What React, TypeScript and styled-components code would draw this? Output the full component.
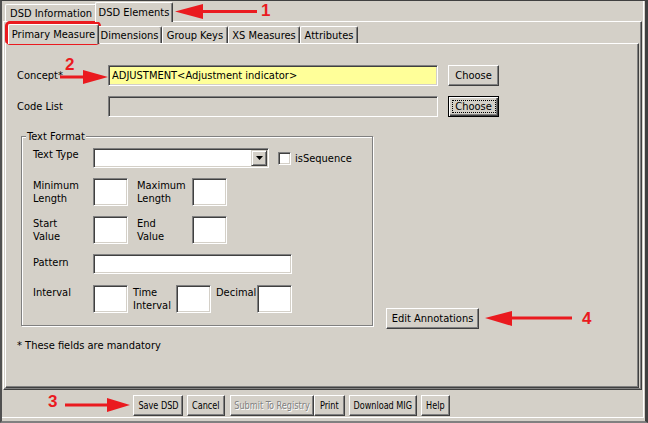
import React from "react";
import styled, { createGlobalStyle, css } from "styled-components";

const FACE = "#d4d0c8";
const RED = "#ea1a1f";

const Global = createGlobalStyle`
  html, body { margin: 0; padding: 0; background: ${FACE}; }
  body {
    font-family: "DejaVu Sans Condensed", "DejaVu Sans", sans-serif;
    font-size: 11px;
    line-height: 13px;
    color: #000;
  }
  * { box-sizing: border-box; }
`;

const Screen = styled.div`
  position: relative;
  width: 648px;
  height: 423px;
  overflow: hidden;
  background: ${FACE};
`;

const Window = styled.div`
  display: flex;
  flex-direction: column;
  width: 648px;
  height: 423px;
  border-top: 1px solid #404040;
  border-left: 2px solid #505050;
  border-right: 3px solid #404040;
  border-bottom: 2px solid #808080;
  padding: 0 1px 3px 0;
`;

const Body = styled.div`
  flex: 1;
  display: flex;
  flex-direction: column;
  min-height: 0;
  border-right: 1px solid #fff;
  border-bottom: 1px solid #fff;
`;

const TabStrip = styled.div<{ $pad: number; $h: number }>`
  display: flex;
  align-items: flex-end;
  flex: none;
  height: ${(p) => p.$h}px;
  padding-left: ${(p) => p.$pad}px;
  position: relative;
  z-index: 1;
`;

const Tab = styled.div<{ $w: number; $active?: boolean }>`
  flex: none;
  display: flex;
  align-items: center;
  justify-content: center;
  width: ${(p) => (p.$active ? p.$w + 4 : p.$w)}px;
  height: ${(p) => (p.$active ? 20 : 17)}px;
  margin: ${(p) => (p.$active ? "0 -2px -1px -2px" : "0")};
  background: ${FACE};
  border-top: 1px solid #fff;
  border-left: 1px solid #fff;
  border-right: 1px solid #404040;
  box-shadow: inset -1px 0 #808080;
  border-radius: 2px 2px 0 0;
  white-space: nowrap;
  position: relative;
  z-index: ${(p) => (p.$active ? 2 : 1)};
`;

const Panel = styled.div<{ $ml: number; $mr: number; $mb: number }>`
  flex: 1;
  display: flex;
  flex-direction: column;
  min-height: 0;
  margin: 0 ${(p) => p.$mr}px ${(p) => p.$mb}px ${(p) => p.$ml}px;
  border-top: 1px solid #fff;
  border-left: 1px solid #fff;
  border-right: 1px solid #404040;
  border-bottom: 1px solid #404040;
  box-shadow: inset -1px -1px #808080;
`;

const PageContent = styled.div`
  display: flex;
  flex-direction: column;
  padding: 21px 0 0 0;
`;

const FieldRow = styled.div<{ $mt?: number }>`
  display: flex;
  align-items: center;
  padding-left: 11px;
  margin-top: ${(p) => p.$mt ?? 0}px;
`;

const RowLabel = styled.div`
  width: 91px;
  flex: none;
  white-space: nowrap;
`;

const TextBox = styled.input<{ $w: number; $h?: number; $bg?: string }>`
  flex: none;
  width: ${(p) => p.$w}px;
  height: ${(p) => p.$h ?? 21}px;
  margin: 0;
  padding: 0 0 0 3px;
  font: inherit;
  color: #000;
  background: ${(p) => p.$bg ?? "#fff"};
  border: 1px solid;
  border-color: #808080 #fff #fff #808080;
  box-shadow: inset 1px 1px #404040, inset -1px -1px ${FACE};
  outline: none;
`;

const PushButton = styled.button<{ $w: number; $ml?: number; $focused?: boolean }>`
  position: relative;
  flex: none;
  display: flex;
  align-items: center;
  justify-content: center;
  width: ${(p) => p.$w}px;
  height: 21px;
  margin: 0 0 0 ${(p) => p.$ml ?? 0}px;
  padding: 0;
  font: inherit;
  color: #000;
  background: ${FACE};
  border: 1px solid;
  border-color: #fff #404040 #404040 #fff;
  box-shadow: inset -1px -1px #808080;
  white-space: nowrap;
  &:disabled {
    color: #808080;
    text-shadow: 1px 1px #fff;
  }
  ${(p) =>
    p.$focused &&
    css`
      border-color: #000;
      box-shadow: inset 1px 1px #fff, inset -1px -1px #404040, inset -2px -2px #808080;
      &::after {
        content: "";
        position: absolute;
        inset: 3px 2px 3px 3px;
        border: 1px dotted #000;
      }
    `}
`;

/* the footer buttons use a visibly narrower face than the form */
const NarrowText = styled.span`
  display: inline-block;
  flex: none;
  transform: scaleX(0.82);
  transform-origin: center;
`;

const MainRow = styled.div`
  display: flex;
  align-items: flex-end;
  padding-left: 15px;
  margin-top: 13px;
`;

const Group = styled.fieldset`
  margin: 0;
  width: 352px;
  min-width: 0;
  padding: 0 0 0 4px;
  border: 1px solid #808080;
  box-shadow: inset 1px 1px #fff, 1px 1px #fff;
`;

const Legend = styled.legend`
  padding: 0 1px;
  line-height: 13px;
  background: ${FACE};
`;

const FieldGrid = styled.div`
  display: flex;
  flex-direction: column;
  padding: 5px 0 12px 7px;
`;

const GridRow = styled.div<{ $mt?: number; $align?: string }>`
  display: flex;
  align-items: ${(p) => p.$align ?? "flex-start"};
  margin-top: ${(p) => p.$mt ?? 0}px;
`;

const FieldLabel = styled.div<{ $w: number; $ml?: number; $pt?: number }>`
  flex: none;
  width: ${(p) => p.$w}px;
  margin-left: ${(p) => p.$ml ?? 0}px;
  padding-top: ${(p) => p.$pt ?? 1}px;
  white-space: nowrap;
  align-self: flex-start;
`;

const SelectBox = styled.div`
  flex: none;
  display: flex;
  justify-content: flex-end;
  align-items: center;
  width: 176px;
  height: 20px;
  padding-right: 1px;
  background: #fff;
  border: 1px solid;
  border-color: #808080 #fff #fff #808080;
  box-shadow: inset 1px 1px #404040, inset -1px -1px ${FACE};
`;

const DropButton = styled.div`
  width: 16px;
  height: 16px;
  display: flex;
  align-items: center;
  justify-content: center;
  background: ${FACE};
  border: 1px solid;
  border-color: ${FACE} #404040 #404040 ${FACE};
  box-shadow: inset 1px 1px #fff, inset -1px -1px #808080;
`;

const CheckBox = styled.div`
  flex: none;
  width: 13px;
  height: 13px;
  margin-left: 9px;
  background: #fff;
  border: 1px solid;
  border-color: #808080 #fff #fff #808080;
  box-shadow: inset 1px 1px #404040, inset -1px -1px ${FACE};
`;

const CheckText = styled.span`
  margin-left: 4px;
  white-space: nowrap;
`;

const Note = styled.div`
  margin-top: 13px;
  padding-left: 11px;
`;

const ButtonBar = styled.div`
  flex: none;
  display: flex;
  align-items: flex-start;
  height: 27px;
  padding: 5px 0 0 131px;
`;

const Overlay = styled.svg`
  position: absolute;
  left: 0;
  top: 0;
  width: 648px;
  height: 423px;
  pointer-events: none;
`;

const Callout = styled.span<{ $x: number; $y: number }>`
  position: absolute;
  left: ${(p) => p.$x}px;
  top: ${(p) => p.$y}px;
  font-family: "Liberation Sans", Arial, sans-serif;
  font-weight: bold;
  font-size: 17px;
  line-height: 17px;
  color: ${RED};
`;

const DownArrow = () => (
  <svg width="7" height="4" viewBox="0 0 7 4">
    <polygon points="0,0 7,0 3.5,4" fill="#000" />
  </svg>
);

const footer = [
  { label: "Save DSD", w: 50, ml: 0 },
  { label: "Cancel", w: 38, ml: 4 },
  { label: "Submit To Registry", w: 84, ml: 5, disabled: true },
  { label: "Print", w: 31, ml: 0 },
  { label: "Download MIG", w: 68, ml: 4 },
  { label: "Help", w: 29, ml: 4 },
];

export default function App() {
  return (
    <>
      <Global />
      <Screen>
        <Window>
          <Body>
            <TabStrip $pad={3} $h={20}>
              <Tab $w={92}>DSD Information</Tab>
              <Tab $w={74} $active>
                DSD Elements
              </Tab>
            </TabStrip>
            <Panel $ml={1} $mr={1} $mb={0}>
              <TabStrip $pad={6} $h={21}>
                <Tab $w={87} $active>
                  Primary Measure
                </Tab>
                <Tab $w={65}>Dimensions</Tab>
                <Tab $w={66}>Group Keys</Tab>
                <Tab $w={72}>XS Measures</Tab>
                <Tab $w={58}>Attributes</Tab>
              </TabStrip>
              <Panel $ml={1} $mr={2} $mb={1}>
                <PageContent>
                  <FieldRow>
                    <RowLabel>Concept*</RowLabel>
                    <TextBox $w={330} $bg="#ffff99" readOnly value="ADJUSTMENT<Adjustment indicator>" />
                    <PushButton $w={51} $ml={10}>
                      Choose
                    </PushButton>
                  </FieldRow>
                  <FieldRow $mt={10}>
                    <RowLabel>Code List</RowLabel>
                    <TextBox $w={330} $bg={FACE} readOnly value="" />
                    <PushButton $w={51} $ml={10} $focused>
                      Choose
                    </PushButton>
                  </FieldRow>
                  <MainRow>
                    <Group>
                      <Legend>Text Format</Legend>
                      <FieldGrid>
                        <GridRow $align="center">
                          <FieldLabel $w={60} $pt={0}>
                            Text Type
                          </FieldLabel>
                          <SelectBox>
                            <DropButton>
                              <DownArrow />
                            </DropButton>
                          </SelectBox>
                          <CheckBox />
                          <CheckText>isSequence</CheckText>
                        </GridRow>
                        <GridRow $mt={10}>
                          <FieldLabel $w={60}>
                            Minimum
                            <br />
                            Length
                          </FieldLabel>
                          <TextBox $w={35} $h={28} readOnly value="" />
                          <FieldLabel $w={55} $ml={9}>
                            Maximum
                            <br />
                            Length
                          </FieldLabel>
                          <TextBox $w={35} $h={28} readOnly value="" />
                        </GridRow>
                        <GridRow $mt={10}>
                          <FieldLabel $w={60}>
                            Start
                            <br />
                            Value
                          </FieldLabel>
                          <TextBox $w={35} $h={28} readOnly value="" />
                          <FieldLabel $w={55} $ml={9}>
                            End
                            <br />
                            Value
                          </FieldLabel>
                          <TextBox $w={35} $h={28} readOnly value="" />
                        </GridRow>
                        <GridRow $mt={10}>
                          <FieldLabel $w={60} $pt={2}>
                            Pattern
                          </FieldLabel>
                          <TextBox $w={199} $h={20} readOnly value="" />
                        </GridRow>
                        <GridRow $mt={11}>
                          <FieldLabel $w={60}>Interval</FieldLabel>
                          <TextBox $w={35} $h={28} readOnly value="" />
                          <FieldLabel $w={43} $ml={5}>
                            Time
                            <br />
                            Interval
                          </FieldLabel>
                          <TextBox $w={35} $h={28} readOnly value="" />
                          <FieldLabel $w={41} $ml={5}>
                            Decimal
                          </FieldLabel>
                          <TextBox $w={35} $h={28} readOnly value="" />
                        </GridRow>
                      </FieldGrid>
                    </Group>
                    <PushButton $w={93} $ml={13} style={{ marginBottom: -3 }}>
                      Edit Annotations
                    </PushButton>
                  </MainRow>
                  <Note>* These fields are mandatory</Note>
                </PageContent>
              </Panel>
            </Panel>
            <ButtonBar>
              {footer.map((b) => (
                <PushButton key={b.label} $w={b.w} $ml={b.ml} disabled={b.disabled}>
                  <NarrowText>{b.label}</NarrowText>
                </PushButton>
              ))}
            </ButtonBar>
          </Body>
        </Window>

        <Overlay viewBox="0 0 648 423">
          <rect x="7" y="23" width="92" height="20" rx="3" fill="none" stroke={RED} strokeWidth="4" />
          <polygon points="175,11.5 203,4 203,19" fill={RED} />
          <rect x="200" y="10" width="57" height="3" fill={RED} />
          <rect x="60" y="75.5" width="26" height="3" fill={RED} />
          <polygon points="108,77 83,70 83,84" fill={RED} />
          <rect x="65" y="403.5" width="45" height="3" fill={RED} />
          <polygon points="130,405 107,398 107,412" fill={RED} />
          <polygon points="485,318 512,311 512,326" fill={RED} />
          <rect x="510" y="316.5" width="62" height="3" fill={RED} />
        </Overlay>
        <Callout $x={261} $y={2}>1</Callout>
        <Callout $x={65} $y={56}>2</Callout>
        <Callout $x={48} $y={393}>3</Callout>
        <Callout $x={582} $y={310}>4</Callout>
      </Screen>
    </>
  );
}
